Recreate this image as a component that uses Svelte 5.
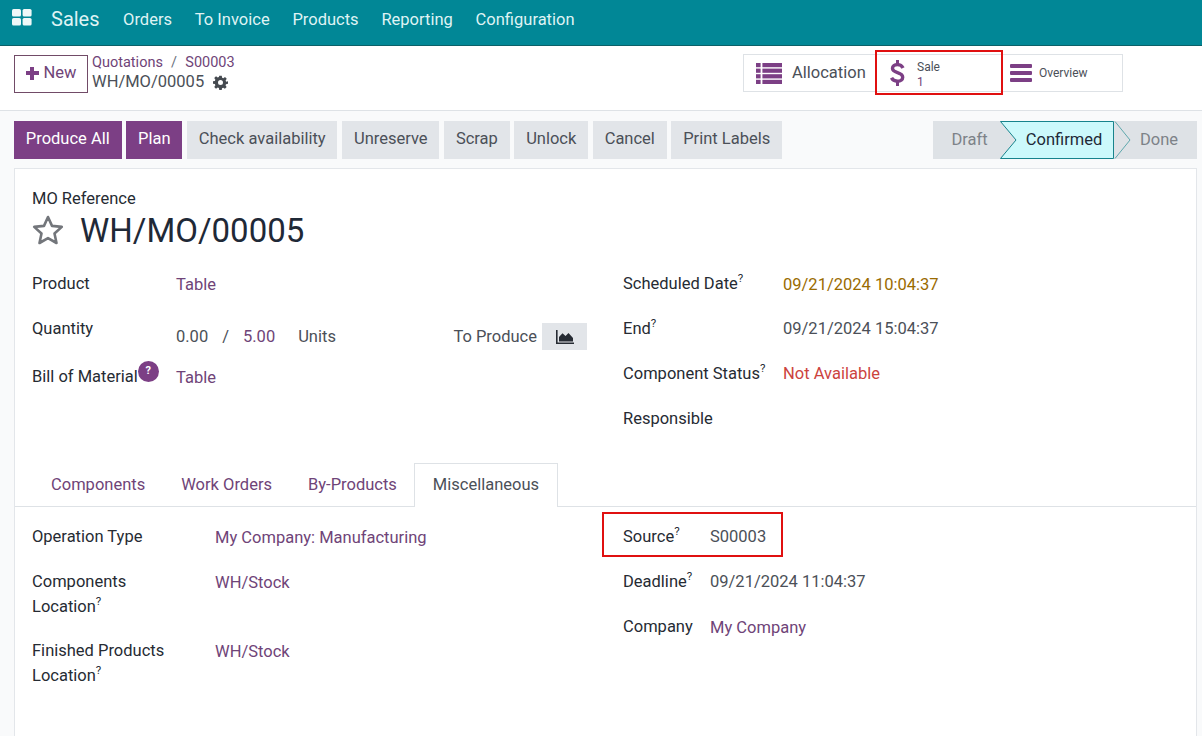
<script>
  const menu = ['Orders', 'To Invoice', 'Products', 'Reporting', 'Configuration'];
  const actions = [
    { label: 'Produce All', primary: true },
    { label: 'Plan', primary: true },
    { label: 'Check availability' },
    { label: 'Unreserve' },
    { label: 'Scrap' },
    { label: 'Unlock' },
    { label: 'Cancel' },
    { label: 'Print Labels' }
  ];
  const tabs = ['Components', 'Work Orders', 'By-Products'];
</script>

<div class="page">
  <nav class="navbar">
    <svg class="apps" viewBox="0 0 20 17" width="20" height="17" aria-hidden="true">
      <rect x="0" y="0" width="9" height="7.5" rx="1.6" />
      <rect x="10.6" y="0" width="9" height="7.5" rx="1.6" />
      <rect x="0" y="9" width="9" height="7.5" rx="1.6" />
      <rect x="10.6" y="9" width="9" height="7.5" rx="1.6" />
    </svg>
    <span class="brand">Sales</span>
    {#each menu as item}
      <span class="menu-item">{item}</span>
    {/each}
  </nav>

  <header class="control">
    <button class="new"><span class="plus"></span>New</button>
    <div class="crumbs">
      <div class="trail"><span class="link">Quotations</span><span class="sep">/</span><span class="link">S00003</span></div>
      <div class="current">
        WH/MO/00005
        <svg class="gear" viewBox="0 0 24 24" width="15" height="15" aria-hidden="true">
          <path fill-rule="evenodd" d="M10 1h4l.6 3.2 1.9.8 2.7-1.8 2.8 2.8-1.8 2.7.8 1.9L24 10v4l-3.2.6-.8 1.9 1.8 2.7-2.8 2.8-2.7-1.8-1.9.8L14 24h-4l-.6-3.2-1.9-.8-2.7 1.8L2 19l1.8-2.7-.8-1.9L0 14v-4l3-.6.8-1.9L2 4.8 4.8 2l2.7 1.8 1.9-.8zM12 8a4 4 0 1 0 0 8 4 4 0 0 0 0-8z" />
        </svg>
      </div>
    </div>
    <div class="stats">
      <div class="stat alloc">
        <svg viewBox="0 0 26 21" width="26" height="21" aria-hidden="true">
          <rect x="0" y="0" width="4.6" height="4.2" /><rect x="6.4" y="0" width="19.6" height="4.2" />
          <rect x="0" y="5.6" width="4.6" height="4.2" /><rect x="6.4" y="5.6" width="19.6" height="4.2" />
          <rect x="0" y="11.2" width="4.6" height="4.2" /><rect x="6.4" y="11.2" width="19.6" height="4.2" />
          <rect x="0" y="16.8" width="4.6" height="4.2" /><rect x="6.4" y="16.8" width="19.6" height="4.2" />
        </svg>
        <span>Allocation</span>
      </div>
      <div class="stat sale">
        <svg class="dollar" viewBox="0 0 15 26" width="15" height="26" aria-hidden="true">
          <path d="M13 8C12 5.800 10 4.600 7.500 4.600 4.500 4.600 2.500 6 2.500 8.300c0 2.400 2 3.400 5 4.300 3.200 1 5.200 2 5.200 4.600 0 2.500-2.200 4-5.200 4-2.800 0-5-1.100-6-3.400" fill="none" />
          <rect x="6" y="0" width="3" height="5" />
          <rect x="6" y="21" width="3" height="5" />
        </svg>
        <div class="stat-text"><span>Sale</span><span class="num">1</span></div>
      </div>
      <div class="stat over">
        <svg viewBox="0 0 22 18" width="22" height="18" aria-hidden="true">
          <rect x="0" y="0" width="22" height="4" rx="1" /><rect x="0" y="7" width="22" height="4" rx="1" /><rect x="0" y="14" width="22" height="4" rx="1" />
        </svg>
        <span>Overview</span>
      </div>
      <div class="mark mark-sale"></div>
    </div>
  </header>

  <div class="bar">
    <div class="actions">
      {#each actions as a}
        <button class="btn" class:primary={a.primary}>{a.label}</button>
      {/each}
    </div>
    <div class="status">
      <span class="st draft">Draft</span>
      <span class="st confirmed">
        <svg class="arrow" viewBox="0 0 132 38" width="132" height="38" aria-hidden="true">
          <path d="M0.500 0.500H113.500V37.500H0.500L16 19Z" fill="#ccf9fb" stroke="#17838c" />
          <path d="M115 0.500L130 19L115 37.500" fill="none" stroke="#5fa8ad" />
        </svg>
        <span class="st-text">Confirmed</span>
      </span>
      <span class="st done">Done</span>
    </div>
  </div>

  <main class="sheet">
    <div class="head">
      <div class="ref-label">MO Reference</div>
      <div class="title">
        <svg class="star" viewBox="0 0 32 30" width="32" height="30" aria-hidden="true">
          <path d="M16 2l4 8.900 9.800 1-7.300 6.600 2 9.500-8.500-4.900-8.500 4.900 2-9.500-7.300-6.600 9.800-1z" fill="none" stroke="#73767b" stroke-width="2.600" stroke-linejoin="round" />
        </svg>
        <h1>WH/MO/00005</h1>
      </div>
    </div>

    <div class="groups">
      <div class="group left">
        <div class="row"><span class="lbl">Product</span><span class="val link">Table</span></div>
        <div class="row qty">
          <span class="lbl">Quantity</span>
          <div class="val qty-val">
            <span>0.00</span><span class="slash">/</span><span class="link">5.00</span><span class="units">Units</span>
            <span class="produce">To Produce</span>
            <span class="chart">
              <svg viewBox="0 0 18 14" width="18" height="14" aria-hidden="true">
                <path d="M0 0h1.600v12.400H18V14H0z" /><path d="M3 11.400V7l3.500-3.800L9.500 6l3-3 4.500 5v3.400z" />
              </svg>
            </span>
          </div>
        </div>
        <div class="row bom">
          <span class="lbl">Bill of Material<span class="help">?</span></span>
          <span class="val link">Table</span>
        </div>
      </div>
      <div class="group right">
        <div class="row"><span class="lbl">Scheduled Date<sup>?</sup></span><span class="val warn">09/21/2024 10:04:37</span></div>
        <div class="row"><span class="lbl">End<sup>?</sup></span><span class="val plain">09/21/2024 15:04:37</span></div>
        <div class="row"><span class="lbl">Component Status<sup>?</sup></span><span class="val plain danger">Not Available</span></div>
        <div class="row"><span class="lbl">Responsible</span><span class="val"></span></div>
      </div>
    </div>

    <div class="tabs">
      {#each tabs as t}
        <span class="tab link">{t}</span>
      {/each}
      <span class="tab active">Miscellaneous</span>
    </div>

    <div class="misc">
      <div class="misc-left">
        <div class="mrow"><span class="lbl">Operation Type</span><span class="val link">My Company: Manufacturing</span></div>
        <div class="mrow tall"><span class="lbl">Components Location<sup>?</sup></span><span class="val link">WH/Stock</span></div>
        <div class="mrow tall"><span class="lbl">Finished Products Location<sup>?</sup></span><span class="val link">WH/Stock</span></div>
      </div>
      <div class="misc-right">
        <div class="mrow"><span class="lbl">Source<sup>?</sup></span><span class="val plain">S00003</span><div class="mark mark-source"></div></div>
        <div class="mrow"><span class="lbl">Deadline<sup>?</sup></span><span class="val plain">09/21/2024 11:04:37</span></div>
        <div class="mrow"><span class="lbl">Company</span><span class="val link">My Company</span></div>
      </div>
    </div>
  </main>
</div>

<style>
  :global(body) { margin: 0; background: #fff; }
  .page {
    height: 736px;
    overflow: hidden;
    display: flex;
    flex-direction: column;
    font-family: Roboto, "Liberation Sans", sans-serif;
    font-size: 16.5px;
    line-height: 24px;
    color: #4b5058;
    background: #f9fafb;
  }
  .link { color: #6f4478; }

  .navbar {
    height: 45px;
    flex: none;
    display: flex;
    align-items: flex-start;
    background: #018796;
    border-bottom: 1px solid #0b6068;
    color: #dff3f4;
    padding-left: 12px;
  }
  .apps { fill: #eef8f8; margin-top: 9px; flex: none; }
  .brand { font-size: 20px; margin: 7px 12px 0 19px; line-height: 24px; }
  .menu-item { margin: 8px 0 0 0; padding: 0 11.3px 0 11.5px; }

  .control {
    height: 65px;
    box-sizing: border-box;
    flex: none;
    background: #fff;
    border-bottom: 1px solid #dee2e6;
    display: flex;
    align-items: flex-start;
    padding-left: 14px;
  }
  .new {
    margin-top: 9px;
    width: 74px;
    height: 38px;
    box-sizing: border-box;
    display: flex;
    align-items: center;
    justify-content: center;
    gap: 5px;
    background: #fff;
    border: 1px solid #714b67;
    color: #6f4478;
    font: inherit;
    padding: 0 0 2px;
  }
  .plus {
    width: 13px;
    height: 13px;
    background:
      linear-gradient(#7c3f85, #7c3f85) center / 13px 4px no-repeat,
      linear-gradient(#7c3f85, #7c3f85) center / 4px 13px no-repeat;
  }
  .crumbs { margin-left: 4px; margin-top: 4px; }
  .trail { line-height: 24px; height: 24px; font-size: 14.5px; padding-top: 1px; box-sizing: border-box; }
  .sep { margin: 0 8.2px; color: #6b7280; }
  .current { font-size: 16.5px; line-height: 18px; color: #4b5058; display: flex; align-items: center; gap: 9px; margin-top: -1px; }
  .gear { fill: #454a50; }

  .stats {
    position: relative;
    margin-left: auto;
    margin-right: 79px;
    margin-top: 8px;
    width: 380px;
    height: 38px;
    box-sizing: border-box;
    display: flex;
    border: 1px solid #dee2e6;
  }
  .stat { display: flex; align-items: center; }
  .stat svg { fill: #7c3f85; flex: none; }
  .alloc { width: 132px; padding-left: 12px; gap: 10px; box-sizing: border-box; }
  .sale { width: 126px; padding-left: 14px; gap: 12px; box-sizing: border-box; font-size: 12px; line-height: 15px; }
  .dollar path { stroke: #7c3f85; stroke-width: 3.4; }
  .stat-text { display: flex; flex-direction: column; padding-top: 3px; }
  .num { color: #6f4478; }
  .over { padding-left: 8px; gap: 7px; font-size: 12px; }
  .mark { position: absolute; border: 2px solid #e01010; box-sizing: border-box; }
  .mark-sale { left: 131px; top: -5px; width: 128px; height: 45px; }

  .bar {
    height: 57px;
    box-sizing: border-box;
    flex: none;
    display: flex;
    align-items: flex-start;
    justify-content: space-between;
    padding: 10px 5px 0 14px;
  }
  .actions { display: flex; gap: 4.7px; }
  .btn {
    height: 38px;
    padding: 0 11.8px 2px;
    border: 0;
    background: #e2e5e9;
    color: #4b5058;
    font: inherit;
  }
  .btn.primary { background: #7c3f85; color: #fff; }

  .status { display: flex; height: 38px; }
  .st { display: flex; align-items: center; justify-content: center; position: relative; box-sizing: border-box; background: #dee2e6; color: #7d8288; }
  .draft { width: 67px; padding-left: 6px; }
  .confirmed { width: 114px; padding-left: 14px; color: #1f2937; z-index: 1; }
  .arrow { position: absolute; left: 0; top: 0; overflow: visible; }
  .st-text { position: relative; }
  .done { width: 83px; padding-left: 7px; }

  .sheet {
    flex: 1;
    margin: 0 5px 0 14px;
    background: #fff;
    border: 1px solid #e3e6ea;
    border-bottom: 0;
    min-height: 0;
  }
  .head { padding: 17px 0 0 17px; }
  .ref-label { color: #262b33; line-height: 24px; padding-top: 1px; margin-bottom: -1px; }
  .title { display: flex; align-items: center; height: 40px; }
  .star { flex: none; margin-right: 16px; }
  h1 { margin: 0; padding-top: 1px; font-weight: 400; font-size: 33px; line-height: 40px; color: #1f2937; }
  .groups { display: flex; margin-top: 22px; height: 191px; }
  .group { display: flex; flex-direction: column; }
  .left { width: 608px; padding-left: 17px; box-sizing: border-box; }
  .row { display: flex; height: 45px; align-items: flex-start; }
  .lbl { color: #262b33; }
  .val { position: relative; top: 1px; }
  .val.plain { top: 0; }
  .left .lbl { width: 144px; flex: none; }
  .right .lbl { width: 160px; flex: none; }
  sup { font-size: 11.500px; line-height: 0; position: relative; top: -1px; vertical-align: super; }
  .qty-val { display: flex; align-items: center; width: 411px; top: 6px; }
  .slash { margin: 0 14px; }
  .units { margin-left: 23px; }
  .produce { margin-left: auto; margin-right: 5px; }
  .chart { width: 45px; height: 27px; background: #e2e5e9; display: flex; align-items: center; justify-content: center; }
  .chart svg { fill: #262b33; }
  .bom { position: relative; top: 3px; }
  .help {
    display: inline-block;
    position: relative;
    top: -6px;
    width: 21px;
    height: 21px;
    border-radius: 50%;
    background: #7c3f85;
    color: #fff;
    font-size: 11px;
    font-weight: 700;
    line-height: 19px;
    text-align: center;
    vertical-align: middle;
  }
  .tabs {
    display: flex;
    height: 44px;
    box-sizing: border-box;
    align-items: flex-start;
    border-bottom: 1px solid #dee2e6;
    padding-left: 18px;
  }
  .tab { padding: 10px 18px 0; height: 44px; box-sizing: border-box; }
  .active {
    background: #fff;
    border: 1px solid #dee2e6;
    border-bottom: 0;
    color: #4b5058;
    height: 44px;
    margin-left: -1px;
    padding-top: 9px;
  }
  .misc { display: flex; padding-top: 17px; }
  .misc-left { width: 608px; padding-left: 17px; box-sizing: border-box; }
  .mrow { display: flex; height: 45px; align-items: flex-start; position: relative; }
  .mrow.tall { height: 69px; }
  .mrow .val { top: 1.5px; }
  .mrow .val.plain { top: 0.5px; }
  .misc-left .lbl { width: 183px; flex: none; padding-right: 24px; box-sizing: border-box; line-height: 25px; }
  .misc-right .lbl { width: 87px; flex: none; line-height: 25px; }
  .mark-source { left: -21px; top: -12px; width: 181px; height: 45px; }
  .warn { color: #9a6b01; }
  .danger { color: #cc433e; }
</style>
